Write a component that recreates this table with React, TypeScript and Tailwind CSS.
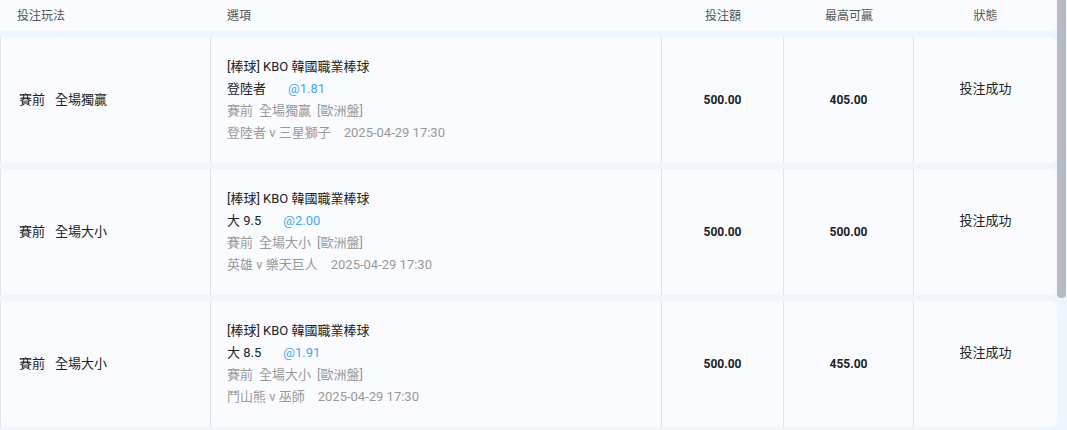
const rows = [
  {
    play: ["賽前", "全場獨贏"],
    pick: "登陸者",
    odds: "@1.81",
    market: ["賽前", "全場獨贏", "[歐洲盤]"],
    match: "登陸者 v 三星獅子",
    stake: "500.00",
    win: "405.00",
  },
  {
    play: ["賽前", "全場大小"],
    pick: "大 9.5",
    odds: "@2.00",
    market: ["賽前", "全場大小", "[歐洲盤]"],
    match: "英雄 v 樂天巨人",
    stake: "500.00",
    win: "500.00",
  },
  {
    play: ["賽前", "全場大小"],
    pick: "大 8.5",
    odds: "@1.91",
    market: ["賽前", "全場大小", "[歐洲盤]"],
    match: "鬥山熊 v 巫師",
    stake: "500.00",
    win: "455.00",
  },
];

export default function App() {
  return (
    <div className="flex h-[430px] w-[1067px] overflow-hidden bg-[#eef5fd] font-['Roboto','Noto_Sans_CJK_TC',sans-serif] text-[13px] text-[#222]">
      <div className="flex w-[1057px] flex-col gap-[6px]">
        {/* header */}
        <div className="flex h-[31px] shrink-0 items-center rounded-br-[7px] bg-[#f9fbff] text-[12px] text-[#555]">
          <div className="w-[211px] pl-[17px]">投注玩法</div>
          <div className="w-[451px] pl-[16px]">選項</div>
          <div className="w-[122px] text-center">投注額</div>
          <div className="w-[130px] text-center">最高可贏</div>
          <div className="w-[143px] text-center">狀態</div>
        </div>

        {rows.map((r, i) => (
          <div
            key={i}
            className="flex h-[126px] shrink-0 rounded-r-[7px] border-l border-[#dfe4ee] bg-[#f9fbff]"
          >
            <div className="flex w-[210px] items-center border-r border-[#dfe4ee] pl-[18px]">
              <span>{r.play[0]}</span>
              <span className="ml-[10px]">{r.play[1]}</span>
            </div>
            <div className="flex w-[451px] flex-col justify-center border-r border-[#dfe4ee] pl-[16px] leading-[22px]">
              <div className="text-[#222]">[棒球] KBO 韓國職業棒球</div>
              <div className="flex">
                <span>{r.pick}</span>
                <span className="ml-[22px] text-[#46a7f5]">{r.odds}</span>
              </div>
              <div className="flex gap-[6px] text-[#999]">
                {r.market.map((m) => (
                  <span key={m}>{m}</span>
                ))}
              </div>
              <div className="flex text-[#999]">
                <span>{r.match}</span>
                <span className="ml-[13px]">2025-04-29 17:30</span>
              </div>
            </div>
            <div className="flex w-[122px] items-center justify-center border-r border-[#dfe4ee] text-[12px] font-bold">
              {r.stake}
            </div>
            <div className="flex w-[130px] items-center justify-center border-r border-[#dfe4ee] text-[12px] font-bold">
              {r.win}
            </div>
            <div className="flex w-[143px] items-center justify-center pb-[22px]">投注成功</div>
          </div>
        ))}
      </div>

      {/* scrollbar */}
      <div className="flex w-[10px] flex-col">
        <div className="h-[298px] w-[9px] rounded-b-[4px] bg-[#b8bbc7]" />
      </div>
    </div>
  );
}
